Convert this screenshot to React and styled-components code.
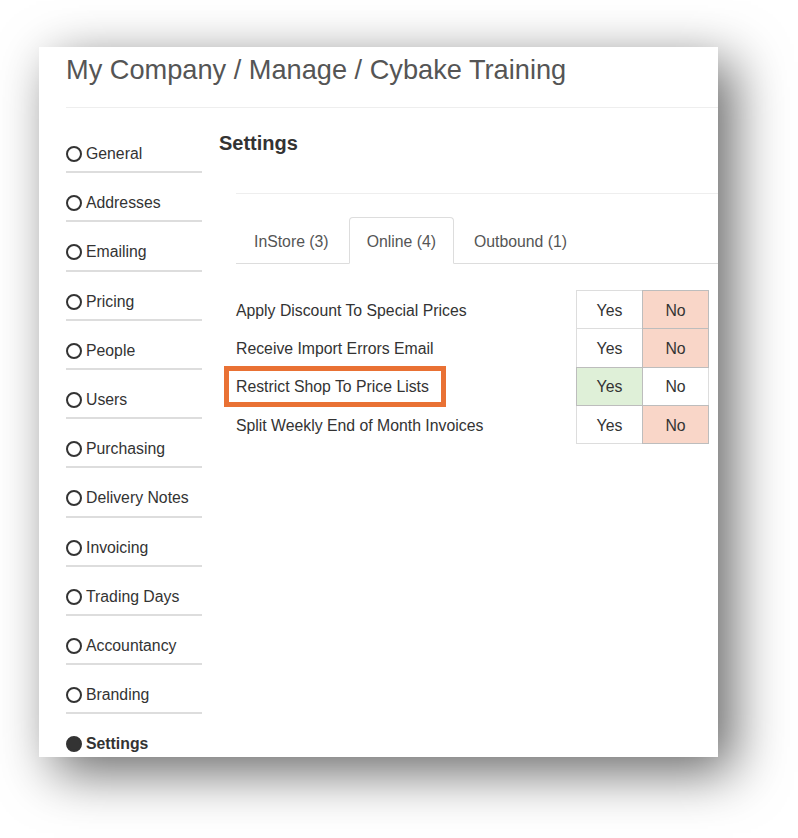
import React from 'react';
import styled, { createGlobalStyle } from 'styled-components';

const GlobalStyle = createGlobalStyle`
    html, body {
        margin: 0;
        padding: 0;
        background: #fff;
    }
    body {
        font-family: "Liberation Sans", Arial, sans-serif;
        font-size: 15.8px;
        color: #333;
    }
    * {
        box-sizing: border-box;
    }
`

const Page = styled.div`
    padding: 47px 0 0 39px;
    height: 838px;
    overflow: hidden;
`
const Panel = styled.div`
    width: 679px;
    height: 710px;
    overflow: hidden;
    background: #fff;
    padding-left: 27px;
    box-shadow: 15px 15px 50px rgba(0, 0, 0, 0.6);
`
const Header = styled.h1`
    margin: 0;
    padding: 7px 0 21px;
    font-size: 27.2px;
    line-height: 32px;
    font-weight: normal;
    color: #555;
    border-bottom: 1px solid #eee;
    white-space: nowrap;
`
const Body = styled.div`
    display: flex;
    gap: 17px;
    margin-top: 16px;
`
const Sidebar = styled.ul`
    list-style: none;
    margin: 0;
    padding: 0;
    width: 136px;
    flex-shrink: 0;
`
const NavItem = styled.li`
    display: flex;
    align-items: flex-start;
    gap: 4px;
    height: 49.2px;
    padding-top: 21px;
    line-height: 18px;
    border-bottom: 2px solid #ddd;
    font-weight: ${({ active }) => (active ? 'bold' : 'normal')};
    white-space: nowrap;
`
const Radio = styled.span`
    width: 16px;
    height: 16px;
    margin-top: 1px;
    border-radius: 50%;
    border: 2px solid #333;
    background: ${({ checked }) => (checked ? '#333' : 'transparent')};
    flex-shrink: 0;
`
const Main = styled.div`
    flex: 1;
    min-width: 0;
`
const Title = styled.h2`
    margin: 7px 0 0;
    font-size: 20px;
    line-height: 24px;
    font-weight: bold;
    color: #333;
`
const Section = styled.div`
    margin: 38px 0 0 17px;
    padding-top: 23px;
    border-top: 1px solid #eee;
`
const TabBar = styled.ul`
    display: flex;
    list-style: none;
    margin: 0;
    padding: 0;
    border-bottom: 1px solid #ddd;
`
const Tab = styled.li`
    margin: 0 2px -1px 0;
    padding: 15px 17px 12px;
    line-height: 18px;
    color: #555;
    white-space: nowrap;
    border: 1px solid ${({ active }) => (active ? '#ddd' : 'transparent')};
    border-bottom-color: transparent;
    border-radius: 4px 4px 0 0;
    background: ${({ active }) => (active ? '#fff' : 'transparent')};
`
const SettingList = styled.div`
    margin: 26px 9px 0 0;
`
const SettingRow = styled.div`
    display: flex;
    align-items: center;
    height: 38.3px;
`
const Label = styled.div`
    position: relative;
    flex: 1;
    padding-top: 3px;
    white-space: nowrap;
`
const Highlight = styled.span`
    position: absolute;
    left: -12px;
    top: -9px;
    width: 222px;
    height: 41px;
    border: 5px solid #e97134;
`
const Toggle = styled.div`
    display: flex;
    height: 100%;
`
const Option = styled.div`
    position: relative;
    width: 67px;
    height: calc(100% + 1px);
    margin-left: -1px;
    padding-top: 2px;
    display: flex;
    align-items: center;
    justify-content: center;
    border: 1px solid ${({ selected }) => (selected ? '#bdbdbd' : '#ddd')};
    background: ${({ selected, kind }) =>
        !selected ? '#fff' : kind === 'yes' ? '#dff0d8' : '#f9d6c8'};
    z-index: ${({ selected }) => (selected ? 1 : 0)};
    color: #333;
`

const NAV = [
    'General',
    'Addresses',
    'Emailing',
    'Pricing',
    'People',
    'Users',
    'Purchasing',
    'Delivery Notes',
    'Invoicing',
    'Trading Days',
    'Accountancy',
    'Branding',
    'Settings'
]

const TABS = [
    { title: 'InStore (3)' },
    { title: 'Online (4)', active: true },
    { title: 'Outbound (1)' }
]

const SETTINGS = [
    { label: 'Apply Discount To Special Prices', value: false },
    { label: 'Receive Import Errors Email', value: false },
    { label: 'Restrict Shop To Price Lists', value: true, highlight: true },
    { label: 'Split Weekly End of Month Invoices', value: false }
]

const App = () => (
    <Page>
        <GlobalStyle />
        <Panel>
            <Header>My Company / Manage / Cybake Training</Header>
            <Body>
                <Sidebar>
                    {NAV.map((name) => (
                        <NavItem key={name} active={name === 'Settings'}>
                            <Radio checked={name === 'Settings'} />
                            {name}
                        </NavItem>
                    ))}
                </Sidebar>
                <Main>
                    <Title>Settings</Title>
                    <Section>
                        <TabBar>
                            {TABS.map((t) => (
                                <Tab key={t.title} active={t.active}>{t.title}</Tab>
                            ))}
                        </TabBar>
                        <SettingList>
                            {SETTINGS.map((s) => (
                                <SettingRow key={s.label}>
                                    <Label>
                                        {s.highlight && <Highlight />}
                                        {s.label}
                                    </Label>
                                    <Toggle>
                                        <Option kind="yes" selected={s.value}>Yes</Option>
                                        <Option kind="no" selected={!s.value}>No</Option>
                                    </Toggle>
                                </SettingRow>
                            ))}
                        </SettingList>
                    </Section>
                </Main>
            </Body>
        </Panel>
    </Page>
)

export default App
